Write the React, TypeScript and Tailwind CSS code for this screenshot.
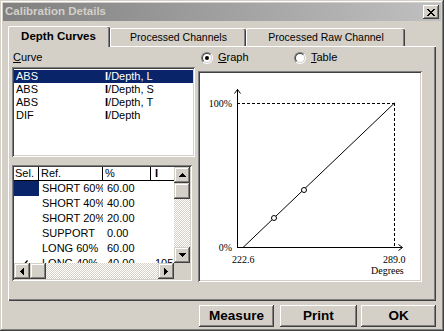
import React from "react";

const raised =
  "shadow-[inset_-1px_-1px_#404040,inset_1px_1px_#ffffff,inset_-2px_-2px_#808080,inset_2px_2px_#d4d0c8]";
const sbButton =
  "shadow-[inset_-1px_-1px_#404040,inset_1px_1px_#d4d0c8,inset_-2px_-2px_#808080,inset_2px_2px_#ffffff]";
const sunken =
  "shadow-[inset_1px_1px_#808080,inset_-1px_-1px_#ffffff,inset_2px_2px_#404040,inset_-2px_-2px_#d4d0c8]";
const checker =
  "bg-[repeating-conic-gradient(#ffffff_0_25%,#d4d0c8_0_50%)] bg-[length:2px_2px]";

function Radio({ checked }: { checked?: boolean }) {
  return (
    <div className="w-[12px] h-[12px] rounded-full border border-t-[#808080] border-l-[#808080] border-r-white border-b-white">
      <div className="w-full h-full rounded-full border border-t-[#404040] border-l-[#404040] border-r-[#d4d0c8] border-b-[#d4d0c8] bg-white flex items-center justify-center">
        {checked && <div className="w-[4px] h-[4px] rounded-full bg-black" />}
      </div>
    </div>
  );
}

function Arrow({ dir }: { dir: "up" | "down" | "left" | "right" }) {
  const d =
    dir === "up"
      ? "M3 0h1v1h1v1h1v1h1v1H0V3h1V2h1V1h1z"
      : dir === "down"
      ? "M0 0h7v1H6v1H5v1H4v1H3V3H2V2H1V1H0z"
      : dir === "left"
      ? "M3 0h1v7H3V6H2V5H1V4H0V3h1V2h1V1h1z"
      : "M0 0h1v1h1v1h1v1h1v1H3v1H2v1H1v1H0z";
  const w = dir === "up" || dir === "down" ? 7 : 4;
  const h = dir === "up" || dir === "down" ? 4 : 7;
  return (
    <svg width={w} height={h} viewBox={`0 0 ${w} ${h}`} shapeRendering="crispEdges">
      <path d={d} fill="#000" />
    </svg>
  );
}

const curves = [
  ["ABS", "Depth, L"],
  ["ABS", "Depth, S"],
  ["ABS", "Depth, T"],
  ["DIF", "Depth"],
];

const gridRows = [
  { ref: "SHORT 60%", pct: "60.00", v: "", sel: true },
  { ref: "SHORT 40%", pct: "40.00", v: "" },
  { ref: "SHORT 20%", pct: "20.00", v: "" },
  { ref: "SUPPORT", pct: "0.00", v: "" },
  { ref: "LONG 60%", pct: "60.00", v: "" },
  { ref: "LONG 40%", pct: "40.00", v: "105", check: true },
];

function Chart() {
  return (
    <svg width="220" height="207" className="block" fontFamily="'Liberation Serif', serif" fontSize="10">
      <g stroke="#000" strokeWidth="1" fill="none" shapeRendering="crispEdges">
        <line x1="37.5" y1="16" x2="37.5" y2="175" />
        <line x1="37" y1="174.5" x2="202" y2="174.5" />
        <line x1="37" y1="30.5" x2="194" y2="30.5" strokeDasharray="3 2" />
        <line x1="194.5" y1="30" x2="194.5" y2="174" strokeDasharray="3 2" />
      </g>
      <g stroke="#000" strokeWidth="1" fill="none">
        <polyline points="34.5,20.5 37.5,16.5 40.5,20.5" />
        <polyline points="198.5,171.5 202.5,174.5 198.5,177.5" />
        <line x1="43" y1="174.5" x2="194.5" y2="30" />
        <circle cx="74" cy="145" r="2.5" fill="#fff" />
        <circle cx="104" cy="117" r="2.5" fill="#fff" />
      </g>
      <g fill="#000">
        <text x="32" y="34" textAnchor="end">100%</text>
        <text x="32" y="178" textAnchor="end">0%</text>
        <text x="32" y="190">222.6</text>
        <text x="183" y="190">289.0</text>
        <text x="171" y="201">Degrees</text>
      </g>
    </svg>
  );
}

export default function App() {
  return (
    <div
      className={`w-[444px] h-[331px] bg-[#d4d0c8] font-['Liberation_Sans',Arial,sans-serif] text-black p-[3px] flex flex-col overflow-hidden shadow-[inset_-1px_-1px_#404040,inset_1px_1px_#d4d0c8,inset_-2px_-2px_#808080,inset_2px_2px_#ffffff]`}
    >
      {/* Title bar */}
      <div className="h-[18px] shrink-0 flex items-center justify-between bg-[linear-gradient(to_right,#808080,#c0c0c0)] px-[2px]">
        <span className="text-[11.5px] font-bold text-[#d4d0c8] leading-none">Calibration Details</span>
        <div className={`w-[16px] h-[14px] bg-[#d4d0c8] flex items-center justify-center ${raised}`}>
          <svg width="8" height="7" viewBox="0 0 8 7" shapeRendering="crispEdges">
            <path
              d="M0 0h2v1h1v1h2V1h1V0h2v1H7v1H6v1H5v1h1v1h1v1h1v1H6V6H5V5H3v1H2v1H0V6h1V5h1V4h1V3H2V2H1V1H0z"
              fill="#000"
            />
          </svg>
        </div>
      </div>

      {/* Tabs */}
      <div className="mt-[5px] ml-[5px] h-[20px] shrink-0 flex items-end relative z-10">
        <div className="w-[102px] h-[21px] -mb-px bg-[#d4d0c8] border-l border-t border-white rounded-tl-[2px] rounded-tr-[2px] shadow-[inset_-1px_0_#404040,inset_-2px_0_#808080] flex items-center justify-center text-[11.5px] font-bold pr-[2px]">
          Depth Curves
        </div>
        <div className="w-[136px] h-[18px] bg-[#d4d0c8] border-l border-t border-white rounded-tl-[2px] rounded-tr-[2px] shadow-[inset_-1px_0_#404040,inset_-2px_0_#808080] flex items-center justify-center text-[10.5px] pt-[1px]">
          Processed Channels
        </div>
        <div className="w-[159px] h-[18px] bg-[#d4d0c8] border-l border-t border-white rounded-tl-[2px] rounded-tr-[2px] shadow-[inset_-1px_0_#404040,inset_-2px_0_#808080] flex items-center justify-center text-[10.5px] pt-[1px]">
          Processed Raw Channel
        </div>
      </div>

      {/* Panel */}
      <div className="ml-[5px] w-[428px] h-[255px] shrink-0 border-l border-t border-white shadow-[inset_-1px_-1px_#404040,inset_-2px_-2px_#808080] flex pt-[4px] pl-[3px]">
        {/* Left column */}
        <div className="w-[183px] flex flex-col">
          <div className="h-[13px] text-[11px] leading-[13px] pl-[1px]">
            <span className="underline underline-offset-1">C</span>urve
          </div>
          <div className={`mt-[3px] h-[90px] bg-white p-[2px] pt-[3px] ${sunken}`}>
            {curves.map((c, i) => (
              <div
                key={i}
                className={`h-[13px] flex text-[11px] leading-[13px] ${i === 0 ? "bg-[#0a246a] text-white" : ""}`}
              >
                <span className="w-[91px] pl-[2px]">{c[0]}</span>
                <span>
                  <span className="font-bold">I</span>/{c[1]}
                </span>
              </div>
            ))}
          </div>
          <div className={`mt-[8px] h-[116px] w-[180px] bg-white p-[2px] flex flex-col ${sunken}`}>
            <div className="h-[96px] flex">
              <div className="w-[160px] h-[96px] overflow-hidden text-[11px] leading-[13px]">
                <div className="h-[14px] flex border-b border-black">
                  <div className="w-[25px] border-r border-black pl-[1px]">Sel.</div>
                  <div className="w-[64px] border-r border-black pl-[2px]">Ref.</div>
                  <div className="w-[48px] border-r border-black pl-[2px]">%</div>
                  <div className="flex-1 pl-[4px] font-bold">I</div>
                </div>
                {gridRows.map((r, i) => (
                  <div key={i} className="h-[15px] flex leading-[15px]">
                    <div className={`w-[25px] relative ${r.sel ? "bg-[#0a246a]" : ""}`}>
                      {r.check && (
                        <svg width="8" height="7" viewBox="0 0 8 7" className="absolute left-[6px] top-[4px]">
                          <path d="M0.5 3.5 L2.8 6 L7.5 0.5" stroke="#000" strokeWidth="1.3" fill="none" />
                        </svg>
                      )}
                    </div>
                    <div className="w-[64px] pl-[3px] overflow-hidden whitespace-nowrap">{r.ref}</div>
                    <div className="w-[48px] pl-[4px] overflow-hidden whitespace-nowrap">{r.pct}</div>
                    <div className="flex-1 pl-[4px] overflow-hidden whitespace-nowrap">{r.v}</div>
                  </div>
                ))}
              </div>
              <div className="w-[16px] h-[96px] flex flex-col bg-[#d4d0c8]">
                <div className={`h-[16px] flex items-center justify-center bg-[#d4d0c8] ${sbButton}`}>
                  <Arrow dir="up" />
                </div>
                <div className={`h-[16px] bg-[#d4d0c8] ${sbButton}`} />
                <div className={`flex-1 ${checker}`} />
                <div className={`h-[16px] flex items-center justify-center bg-[#d4d0c8] ${sbButton}`}>
                  <Arrow dir="down" />
                </div>
              </div>
            </div>
            <div className="h-[16px] flex">
              <div className="w-[160px] flex">
                <div className={`w-[16px] flex items-center justify-center bg-[#d4d0c8] ${sbButton}`}>
                  <Arrow dir="left" />
                </div>
                <div className={`w-[16px] bg-[#d4d0c8] ${sbButton}`} />
                <div className={`flex-1 ${checker}`} />
                <div className={`w-[16px] flex items-center justify-center bg-[#d4d0c8] ${sbButton}`}>
                  <Arrow dir="right" />
                </div>
              </div>
              <div className="w-[16px] bg-[#d4d0c8]" />
            </div>
          </div>
        </div>

        {/* Right column */}
        <div className="ml-[3px] w-[224px] flex flex-col">
          <div className="h-[13px] flex items-center text-[11px] leading-[13px]">
            <div className="w-[96px] pl-[3px] flex items-center">
              <Radio checked />
              <span className="ml-[5px]">
                <span className="underline underline-offset-1">G</span>raph
              </span>
            </div>
            <div className="flex items-center">
              <Radio />
              <span className="ml-[5px]">
                <span className="underline underline-offset-1">T</span>able
              </span>
            </div>
          </div>
          <div className={`mt-[7px] h-[211px] w-[224px] bg-white p-[2px] ${sunken}`}>
            <Chart />
          </div>
        </div>
      </div>

      {/* Buttons */}
      <div className="mt-[4px] flex justify-end pr-[5px]">
        <button className={`w-[75px] h-[22px] bg-[#d4d0c8] text-[13.5px] font-bold leading-none ${raised}`}>
          Measure
        </button>
        <button className={`ml-[6px] w-[77px] h-[22px] bg-[#d4d0c8] text-[13.5px] font-bold leading-none ${raised}`}>
          Print
        </button>
        <button className={`ml-[4px] w-[75px] h-[22px] bg-[#d4d0c8] text-[13.5px] font-bold leading-none ${raised}`}>
          OK
        </button>
      </div>
    </div>
  );
}
